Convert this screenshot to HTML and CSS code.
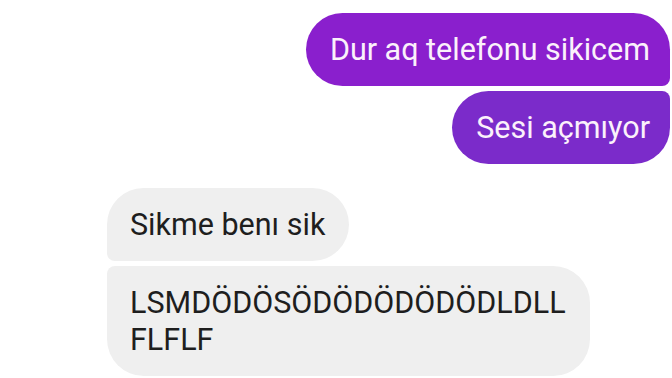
FILE: index.html
```html
<!DOCTYPE html>
<html>
<head>
<meta charset="utf-8">
<link rel="stylesheet" href="styles.css">
</head>
<body>
<div class="chat">
  <div class="group out">
    <div class="bubble first">Dur aq telefonu sikicem</div>
    <div class="bubble last second">Sesi açmıyor</div>
  </div>
  <div class="group in">
    <div class="bubble first">Sikme benı sik</div>
    <div class="bubble last">LSMDÖDÖSÖDÖDÖDÖDÖDLDLL<br>FLFLF</div>
  </div>
</div>
</body>
</html>
```
FILE: styles.css
```css
html, body {
  margin: 0;
  padding: 0;
  background: #ffffff;
  height: 100%;
  overflow: hidden;
}
.chat {
  display: flex;
  flex-direction: column;
  gap: 24px;
  padding: 13px 2px 0 107px;
  font-family: Roboto, "Noto Sans", sans-serif;
  font-size: 30.5px;
  line-height: 37px;
}
.group {
  display: flex;
  flex-direction: column;
  gap: 5px;
}
.group.out { align-items: flex-end; }
.group.in { align-items: flex-start; }
.bubble {
  padding: 18px 20px 18px 24px;
  border-radius: 37px;
  white-space: nowrap;
}
.out .bubble {
  background: #8a1fcd;
  color: #fbf1fb;
}
.out .bubble.second {
  background: #7b2bca;
}
.out .first { border-bottom-right-radius: 8px; }
.out .last { border-top-right-radius: 8px; }
.in .bubble {
  background: #efefef;
  color: #1e1e1e;
  padding-left: 23px;
  padding-right: 24px;
}
.in .first { border-bottom-left-radius: 8px; }
.in .last { border-top-left-radius: 8px; }
```
